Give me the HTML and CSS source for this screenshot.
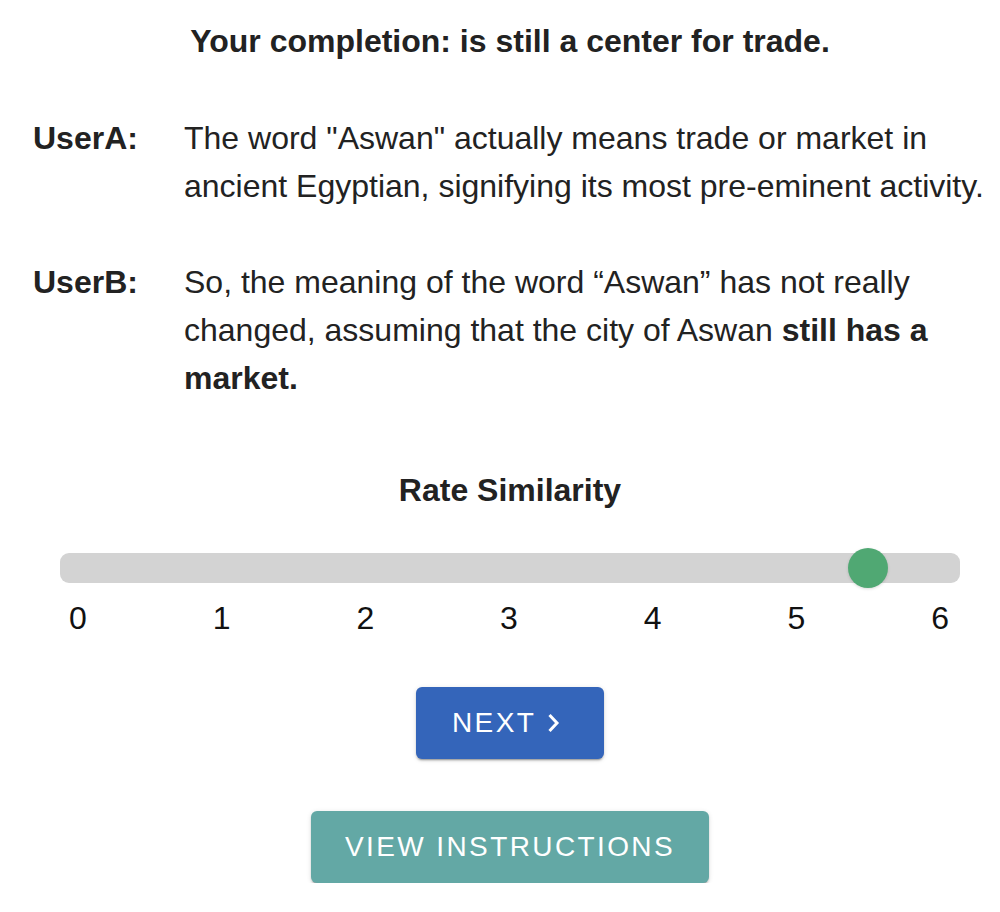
FILE: index.html
```html
<!DOCTYPE html>
<html>
<head>
<meta charset="utf-8">
<link rel="stylesheet" href="styles.css">
</head>
<body>
<main class="page">
  <h1 class="completion">Your completion: is still a center for trade.</h1>

  <section class="dialogue">
    <div class="turn">
      <div class="speaker">UserA:</div>
      <div class="utterance">The word "Aswan" actually means trade or market in ancient Egyptian, signifying its most pre-eminent activity.</div>
    </div>
    <div class="turn">
      <div class="speaker">UserB:</div>
      <div class="utterance">So, the meaning of the word “Aswan” has not really changed, assuming that the city of Aswan <strong>still has a market.</strong></div>
    </div>
  </section>

  <section class="rating">
    <h2 class="rating-title">Rate Similarity</h2>
    <div class="slider">
      <div class="track">
        <div class="thumb" style="left: calc(18px + (100% - 38px) * 5.5 / 6)"></div>
      </div>
      <div class="marks">
        <span>0</span><span>1</span><span>2</span><span>3</span><span>4</span><span>5</span><span>6</span>
      </div>
    </div>
  </section>

  <div class="actions">
    <button class="btn btn-next"><span>NEXT</span>
      <svg class="chev" viewBox="0 0 24 24" width="24" height="24"><polyline points="7.5,4 15,12 7.5,20" fill="none" stroke="#fff" stroke-width="3" stroke-linecap="butt" stroke-linejoin="miter"/></svg>
    </button>
    <button class="btn btn-help">VIEW INSTRUCTIONS</button>
  </div>
</main>
</body>
</html>
```

FILE: styles.css
```css
* { box-sizing: border-box; }
html, body { margin: 0; padding: 0; background: #fff; }
body {
  font-family: "Liberation Sans", Arial, Helvetica, sans-serif;
  color: #222;
  font-size: 32px;
  line-height: 48px;
}
.page {
  padding: 17px 0 0 20px;
  width: 1000px;
}
.completion {
  margin: 0;
  font-size: 32px;
  line-height: 48px;
  font-weight: bold;
  text-align: center;
}
.dialogue {
  margin-top: 49px;
  display: flex;
  flex-direction: column;
  gap: 48px;
}
.turn {
  display: flex;
}
.speaker {
  font-weight: bold;
  width: 164px;
  padding-left: 13px;
  flex: none;
}
.utterance {
  width: 805px;
}
.utterance strong { font-weight: bold; }
.rating {
  margin-top: 64px;
}
.rating-title {
  margin: 0;
  font-size: 32px;
  line-height: 48px;
  font-weight: bold;
  text-align: center;
}
.slider {
  margin: 39px 40px 0 40px;
}
.track {
  position: relative;
  height: 30px;
  background: #d3d3d3;
  border-radius: 9px;
}
.thumb {
  position: absolute;
  top: -5px;
  width: 40px;
  height: 40px;
  margin-left: -20px;
  border-radius: 50%;
  background: #50a873;
  box-shadow: 0 1px 3px rgba(0,0,0,0.15);
}
.marks {
  margin-top: 11px;
  display: flex;
  justify-content: space-between;
  padding: 0 11px 0 9px;
  color: #111;
}
.actions {
  margin-top: 45px;
  display: flex;
  flex-direction: column;
  align-items: center;
  gap: 52px;
}
.btn {
  height: 72px;
  border: none;
  border-radius: 6px;
  color: #fff;
  font-family: "Liberation Sans", Arial, Helvetica, sans-serif;
  font-size: 28px;
  letter-spacing: 2.4px;
  display: flex;
  align-items: center;
  justify-content: center;
  box-shadow: 0 3px 1px -2px rgba(0,0,0,.2), 0 2px 2px 0 rgba(0,0,0,.14), 0 1px 5px 0 rgba(0,0,0,.12);
}
.btn-next {
  width: 188px;
  background: #3465ba;
  justify-content: flex-start;
  padding: 0 0 0 36px;
}
.chev { margin-left: 6px; flex: none; }
.btn-help {
  width: 398px;
  background: #63a8a5;
}
```
